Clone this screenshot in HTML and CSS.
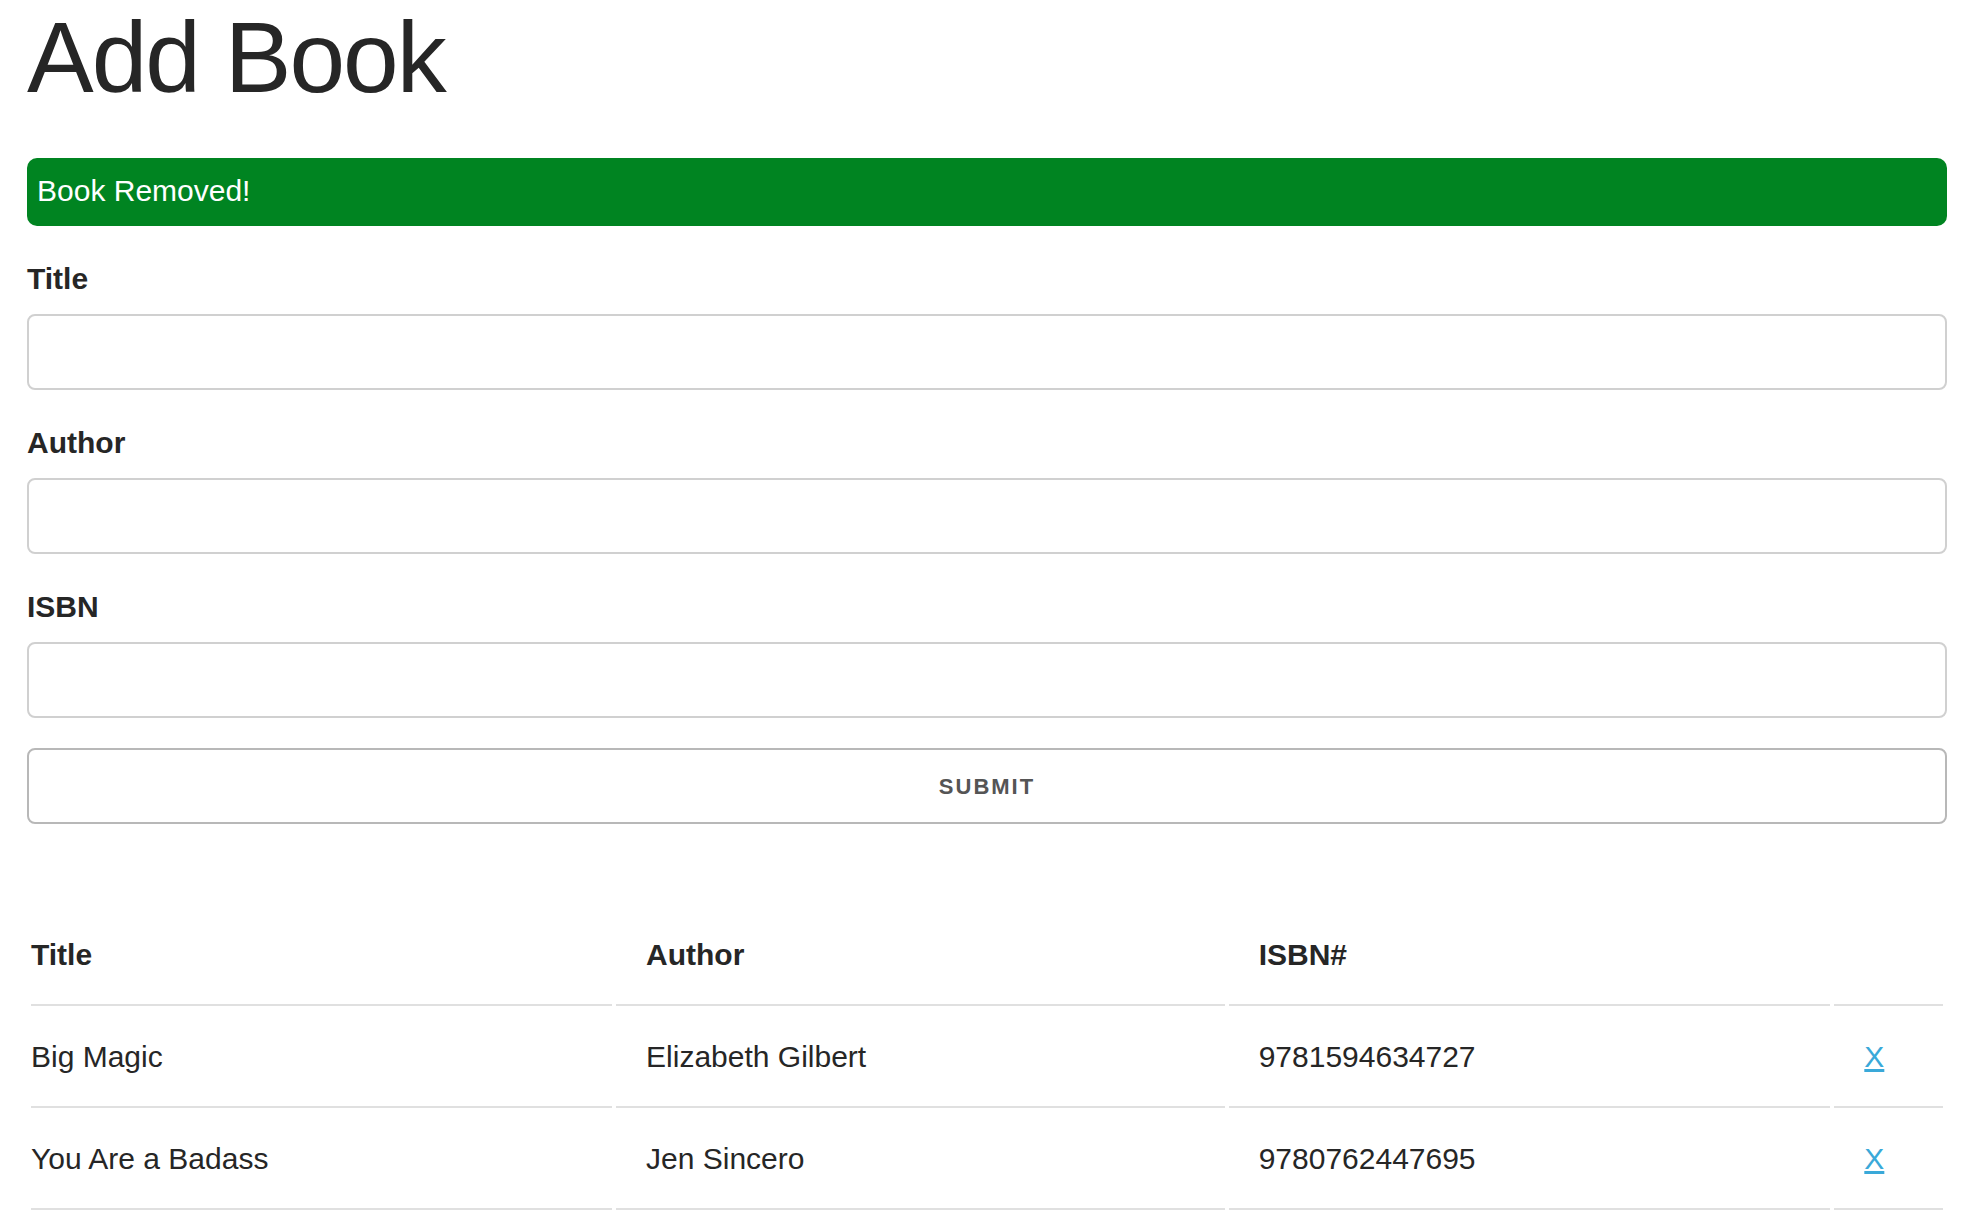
FILE: index.html
```html
<!DOCTYPE html>
<html lang="en">
<head>
<meta charset="utf-8">
<title>Add Book</title>
<link rel="stylesheet" href="styles.css">
</head>
<body>
<main class="container">
  <h1>Add Book</h1>
  <div class="alert success" role="status">Book Removed!</div>
  <form class="book-form">
    <div class="field">
      <label for="title">Title</label>
      <input type="text" id="title">
    </div>
    <div class="field">
      <label for="author">Author</label>
      <input type="text" id="author">
    </div>
    <div class="field">
      <label for="isbn">ISBN</label>
      <input type="text" id="isbn">
    </div>
    <button type="button" class="submit">SUBMIT</button>
  </form>
  <table class="books">
    <thead>
      <tr><th>Title</th><th>Author</th><th>ISBN#</th><th></th></tr>
    </thead>
    <tbody>
      <tr><td>Big Magic</td><td>Elizabeth Gilbert</td><td>9781594634727</td><td><a href="#">X</a></td></tr>
      <tr><td>You Are a Badass</td><td>Jen Sincero</td><td>9780762447695</td><td><a href="#">X</a></td></tr>
    </tbody>
  </table>
</main>
</body>
</html>
```
FILE: styles.css
```css
* { box-sizing: border-box; }
body {
  margin: 0;
  background: #fff;
  color: #262626;
  font-family: "Liberation Sans", Arial, sans-serif;
  font-size: 30px;
  line-height: 46px;
}
.container { padding: 0 20px 0 27px; }
h1 {
  margin: 0 0 44px;
  font-size: 100px;
  line-height: 114px;
  font-weight: 400;
  letter-spacing: -2px;
}
.alert {
  margin-bottom: 30px;
  padding: 10px 10px 12px;
  border-radius: 10px;
  color: #fff;
}
.success { background: #008421; }
.field { margin-bottom: 30px; }
label {
  display: block;
  margin-bottom: 12px;
  font-weight: 700;
}
input, .submit {
  display: block;
  width: 100%;
  height: 76px;
  border: 2px solid #d0d0d0;
  border-radius: 8px;
  background: #fff;
  font: inherit;
}
input { padding: 12px 20px; }
.submit {
  margin-bottom: 80px;
  padding: 2px 60px 0;
  border-color: #b8b8b8;
  color: #555;
  font-size: 22px;
  font-weight: 700;
  letter-spacing: 2px;
}
.books {
  width: 100%;
  border-collapse: separate;
  border-spacing: 4px;
}
th, td {
  padding: 24px 30px 26px;
  border-bottom: 2px solid #e0e0e0;
  text-align: left;
}
th:first-child, td:first-child { padding-left: 0; }
th:last-child, td:last-child { padding-right: 0; }
a { color: #3aa9d9; }
```
